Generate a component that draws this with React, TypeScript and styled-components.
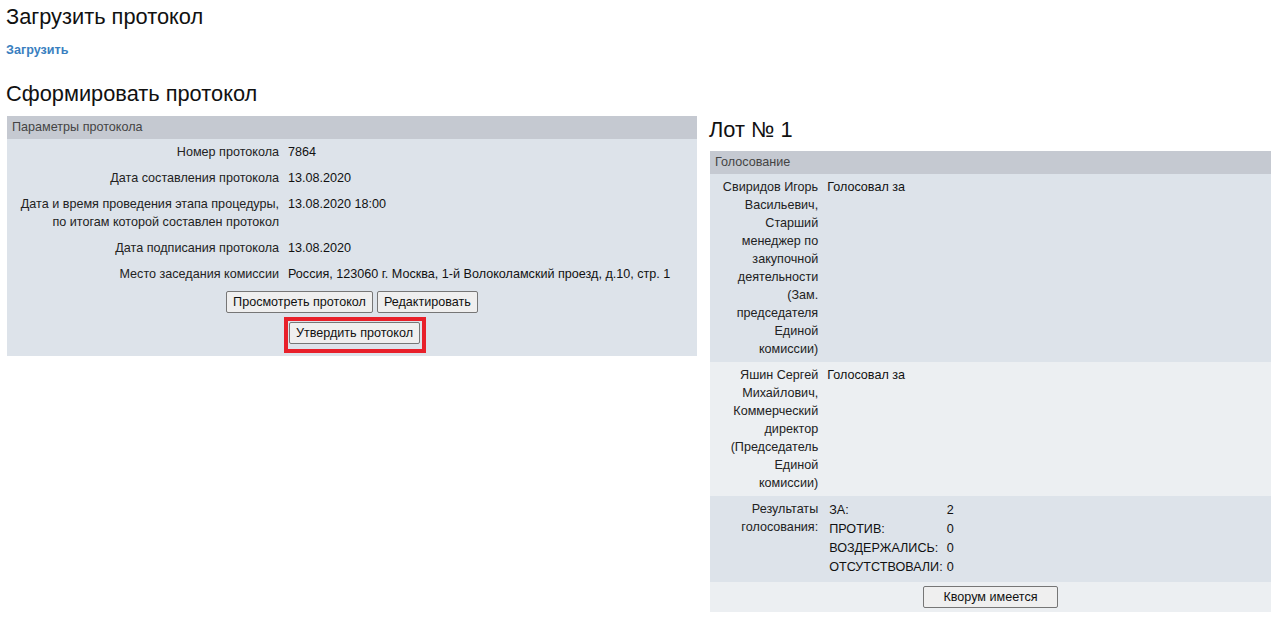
import styled, { createGlobalStyle } from "styled-components";

const GlobalStyle = createGlobalStyle`
  html, body {
    margin: 0;
    padding: 0;
    background: #fff;
  }
  body {
    font-family: "Liberation Sans", Arial, sans-serif;
    font-size: 12.6px;
    color: #222;
  }
`;

const Page = styled.main`
  padding: 0 6px 0 7px;
`;

const Title = styled.h2<{ $top?: number; $bottom?: number }>`
  font-size: 21.8px;
  line-height: 25px;
  font-weight: normal;
  color: #111;
  margin: ${(p) => p.$top ?? 0}px 0 ${(p) => p.$bottom ?? 0}px -1px;
`;

const UploadLink = styled.a`
  display: block;
  font-weight: bold;
  font-size: 12.6px;
  line-height: 14px;
  color: #3a7fc0;
  text-decoration: none;
  margin: 14px 0 24px -1px;
  cursor: pointer;
`;

const Columns = styled.div`
  display: flex;
  align-items: flex-start;
  gap: 13px;
`;

const Column = styled.section<{ $width: number }>`
  width: ${(p) => p.$width}px;
  flex-shrink: 0;
`;

const Panel = styled.table`
  width: 100%;
  border-collapse: collapse;
  table-layout: fixed;
  background: #dde3ea;
  font-size: 12.6px;
`;

const Col = styled.col<{ $width?: string }>`
  width: ${(p) => p.$width ?? "auto"};
`;

const PanelHead = styled.th`
  background: #c5c9d1;
  color: #444;
  font-weight: normal;
  text-align: left;
  padding: 4px 5px;
  line-height: 15px;
`;

const Row = styled.tr<{ $light?: boolean }>`
  background: ${(p) => (p.$light ? "#eceff2" : "#dde3ea")};
`;

const Label = styled.td`
  text-align: right;
  vertical-align: top;
  padding: 4px 4px 4px 5px;
  line-height: 18px;
  color: #222;
`;

const Value = styled.td`
  vertical-align: top;
  padding: 4px 4px 4px 5px;
  line-height: 18px;
  color: #111;
`;

const ActionCell = styled.td<{ $pad?: string }>`
  text-align: center;
  padding: ${(p) => p.$pad ?? "4px"};
`;

const Actions = styled.div`
  display: flex;
  justify-content: center;
  gap: 4px;
`;

const Button = styled.button<{ $wide?: boolean }>`
  font-family: "Liberation Sans", Arial, sans-serif;
  font-size: 12.6px;
  line-height: 14px;
  color: #111;
  background: #efefef;
  border: 1px solid #767676;
  border-radius: 2px;
  padding: 3px ${(p) => (p.$wide ? "19px" : "6px")};
  cursor: pointer;
`;

const Highlight = styled.span`
  display: inline-block;
  border: 4px solid #e8202a;
  padding: 1px 2px 5px 1px;
  margin-left: 6px;
`;

const Results = styled.table`
  border-collapse: collapse;
  margin: 1px 0 1px 0;
`;

const ResultCell = styled.td`
  padding: 0 2px;
  line-height: 19px;
  color: #111;
`;

const params: [string, string][] = [
  ["Номер протокола", "7864"],
  ["Дата составления протокола", "13.08.2020"],
  [
    "Дата и время проведения этапа процедуры, по итогам которой составлен протокол",
    "13.08.2020 18:00",
  ],
  ["Дата подписания протокола", "13.08.2020"],
  ["Место заседания комиссии", "Россия, 123060 г. Москва, 1-й Волоколамский проезд, д.10, стр. 1"],
];

const votes: [string, string][] = [
  [
    "Свиридов Игорь Васильевич, Старший менеджер по закупочной деятельности (Зам. председателя Единой комиссии)",
    "Голосовал за",
  ],
  [
    "Яшин Сергей Михайлович, Коммерческий директор (Председатель Единой комиссии)",
    "Голосовал за",
  ],
];

const totals: [string, number][] = [
  ["ЗА:", 2],
  ["ПРОТИВ:", 0],
  ["ВОЗДЕРЖАЛИСЬ:", 0],
  ["ОТСУТСТВОВАЛИ:", 0],
];

export default function App() {
  return (
    <Page>
      <GlobalStyle />
      <Title $top={4}>Загрузить протокол</Title>
      <UploadLink>Загрузить</UploadLink>
      <Title $bottom={10}>Сформировать протокол</Title>
      <Columns>
        <Column $width={690}>
          <Panel>
            <colgroup>
              <Col $width="40%" />
              <Col />
            </colgroup>
            <thead>
              <tr>
                <PanelHead colSpan={2}>Параметры протокола</PanelHead>
              </tr>
            </thead>
            <tbody>
              {params.map(([label, value]) => (
                <Row key={label}>
                  <Label>{label}</Label>
                  <Value>{value}</Value>
                </Row>
              ))}
              <Row>
                <ActionCell colSpan={2}>
                  <Actions>
                    <Button>Просмотреть протокол</Button>
                    <Button>Редактировать</Button>
                  </Actions>
                </ActionCell>
              </Row>
              <Row>
                <ActionCell colSpan={2} $pad="0 4px 3px">
                  <Highlight>
                    <Button>Утвердить протокол</Button>
                  </Highlight>
                </ActionCell>
              </Row>
            </tbody>
          </Panel>
        </Column>
        <Column $width={561}>
          <Title $top={1} $bottom={9}>Лот № 1</Title>
          <Panel>
            <colgroup>
              <Col $width="20%" />
              <Col />
            </colgroup>
            <thead>
              <tr>
                <PanelHead colSpan={2}>Голосование</PanelHead>
              </tr>
            </thead>
            <tbody>
              {votes.map(([member, vote], i) => (
                <Row key={member} $light={i % 2 === 1}>
                  <Label>{member}</Label>
                  <Value>{vote}</Value>
                </Row>
              ))}
              <Row>
                <Label>Результаты голосования:</Label>
                <Value>
                  <Results>
                    <tbody>
                      {totals.map(([name, count]) => (
                        <tr key={name}>
                          <ResultCell>{name}</ResultCell>
                          <ResultCell>{count}</ResultCell>
                        </tr>
                      ))}
                    </tbody>
                  </Results>
                </Value>
              </Row>
              <Row $light>
                <ActionCell colSpan={2}>
                  <Button $wide>Кворум имеется</Button>
                </ActionCell>
              </Row>
            </tbody>
          </Panel>
        </Column>
      </Columns>
    </Page>
  );
}
